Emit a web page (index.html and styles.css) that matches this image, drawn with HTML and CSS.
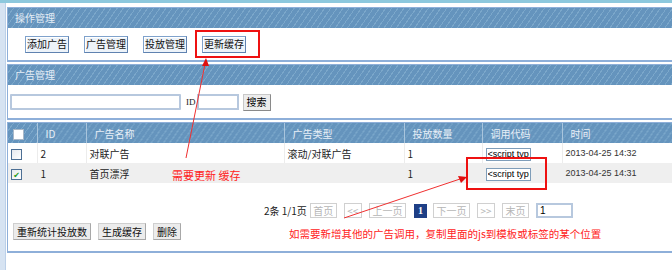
FILE: index.html
```html
<!DOCTYPE html>
<html lang="zh-CN">
<head>
    <meta charset="UTF-8">
    <title>广告管理</title>
    <link rel="stylesheet" href="styles.css">
</head>
<body>
    <div class="top-bar"></div>
    <div class="page">
        <div class="side-strip"></div>
        <div class="main">
            <!-- 操作管理 -->
            <div class="panel">
                <div class="panel-title">操作管理</div>
                <div class="panel-body ops">
                    <button class="op-button">添加广告</button>
                    <button class="op-button">广告管理</button>
                    <button class="op-button">投放管理</button>
                    <button class="op-button">更新缓存</button>
                </div>
            </div>

            <!-- 广告管理 搜索 -->
            <div class="panel">
                <div class="panel-title">广告管理</div>
                <div class="panel-body search">
                    <input type="text" class="search-input">
                    <label class="id-label">ID</label>
                    <input type="text" class="id-input">
                    <button class="search-button">搜索</button>
                </div>
            </div>

            <!-- 广告列表 -->
            <div class="panel list-panel">
                <table class="ad-table">
                    <thead>
                        <tr>
                            <th class="col-check"><span class="checkbox head-check"></span></th>
                            <th class="col-id">ID</th>
                            <th class="col-name">广告名称</th>
                            <th class="col-type">广告类型</th>
                            <th class="col-count">投放数量</th>
                            <th class="col-code">调用代码</th>
                            <th class="col-time">时间</th>
                        </tr>
                    </thead>
                    <tbody>
                        <tr>
                            <td><span class="checkbox"></span></td>
                            <td>2</td>
                            <td>对联广告</td>
                            <td>滚动/对联广告</td>
                            <td>1</td>
                            <td><input type="text" class="code-input" value="<script type=&quot;text/javascript&quot;>"></td>
                            <td class="time">2013-04-25 14:32</td>
                        </tr>
                        <tr class="alt">
                            <td><span class="checkbox checked">&#10004;</span></td>
                            <td>1</td>
                            <td>首页漂浮</td>
                            <td></td>
                            <td>1</td>
                            <td><input type="text" class="code-input" value="<script type=&quot;text/javascript&quot;>"></td>
                            <td class="time">2013-04-25 14:31</td>
                        </tr>
                    </tbody>
                </table>

                <div class="pager">
                    <span class="pager-info">2条 1/1页</span>
                    <span class="pager-btn">首页</span>
                    <span class="pager-btn">&lt;&lt;</span>
                    <span class="pager-btn">上一页</span>
                    <span class="pager-current">1</span>
                    <span class="pager-btn">下一页</span>
                    <span class="pager-btn">&gt;&gt;</span>
                    <span class="pager-btn">末页</span>
                    <input type="text" class="pager-input" value="1">
                </div>

                <div class="bottom-actions">
                    <button class="gray-button wide">重新统计投放数</button>
                    <button class="gray-button">生成缓存</button>
                    <button class="gray-button">删除</button>
                </div>
            </div>
        </div>
    </div>

    <!-- 标注 -->
    <div class="mark-box mark-cache"></div>
    <div class="mark-box mark-code"></div>
    <div class="note note-cache">需要更新&nbsp;缓存</div>
    <div class="note note-code">如需要新增其他的广告调用，复制里面的js到模板或标签的某个位置</div>
    <svg class="arrows" width="672" height="270" viewBox="0 0 672 270">
        <line x1="186" y1="158" x2="205" y2="64" stroke="#f03030" stroke-width="1"/>
        <polygon points="206,58 202,66 209,66" fill="#e01010"/>
        <line x1="344" y1="218" x2="460" y2="179" stroke="#f03030" stroke-width="1"/>
        <polygon points="467,177 458,176 461,183" fill="#e01010"/>
    </svg>
</body>
</html>
```

FILE: styles.css
```css
body {
    margin: 0;
    font-family: "Noto Sans CJK SC", "DejaVu Sans", sans-serif;
    font-size: 10px;
    color: #222;
    background-color: #fff;
    overflow: hidden;
    width: 672px;
    height: 270px;
    position: relative;
}

.top-bar {
    height: 3px;
    background-color: #8dc8dd;
    margin-bottom: 4px;
}

.page {
    display: flex;
    align-items: stretch;
}

.side-strip {
    flex-shrink: 0;
    width: 5px;
    margin-top: -4px;
    height: 270px;
    background-color: #d6e3f2;
    border-right: 1px solid #bcd0e8;
    margin-right: 1px;
}

.main {
    width: 720px;
    flex-shrink: 0;
}

.panel {
    border: 1px solid #8eafd9;
    border-bottom-width: 2px;
    margin-bottom: 2px;
    background-color: #fff;
}

.panel-title {
    height: 20px;
    line-height: 19px;
    padding-left: 7px;
    color: #e6eef6;
    background-color: #6797c0;
    background-image: repeating-linear-gradient(125deg, #6594bd 0 4px, #7ba7ca 4px 5px);
}

.panel-body {
    height: 32px;
    display: flex;
    align-items: center;
}

/* 操作按钮 */
.ops {
    padding-left: 17px;
    gap: 15px;
}

.op-button {
    font-family: inherit;
    font-size: 10px;
    height: 17px;
    padding: 0 1px;
    line-height: 14px;
    color: #111;
    background-color: #edf3f9;
    border: 1px solid #7fa2cc;
    border-right-color: #5f82b0;
    border-bottom-color: #5f82b0;
    box-shadow: inset 1px 1px 0 #fff;
    cursor: pointer;
}

/* 搜索 */
.search {
    height: 33px;
    padding-left: 2px;
}

.search-input {
    width: 167px;
    height: 12px;
    border: 2px solid #b7c8de;
    border-radius: 1px;
    padding: 0;
    margin-top: 1px;
}

.id-label {
    margin: 1px 1px 0 5px;
    font-family: "Liberation Serif", serif;
    font-size: 9px;
}

.id-input {
    width: 38px;
    height: 12px;
    border: 2px solid #b7c8de;
    padding: 0;
    margin-top: 1px;
}

.search-button {
    font-family: inherit;
    font-size: 10px;
    height: 17px;
    padding: 0 3px;
    line-height: 14px;
    margin-left: 4px;
    margin-top: 1px;
    background-color: #ececec;
    border: 1px solid #8a8a8a;
    border-top-color: #c8c8c8;
    border-left-color: #c8c8c8;
    cursor: pointer;
}

/* 列表 */
.list-panel {
    padding-bottom: 11px;
}

.ad-table {
    border-collapse: collapse;
    width: 100%;
    table-layout: fixed;
}

.ad-table th,
.ad-table td {
    box-sizing: border-box;
}

.ad-table th {
    height: 20px;
    padding: 0 0 0 8px;
    text-align: left;
    font-weight: normal;
    color: #e8eff7;
    background-color: #6797c0;
    background-image: repeating-linear-gradient(125deg, #6594bd 0 4px, #7ba7ca 4px 5px);
    border-right: 1px solid #a9c5dd;
}

.ad-table td {
    height: 20px;
    padding: 0 0 0 3px;
    border-right: 1px solid #ececec;
    white-space: nowrap;
    overflow: hidden;
}

.ad-table tr.alt td {
    background-color: #efefef;
    border-right-color: #efefef;
}

.col-check { width: 29px; }
.col-id { width: 49px; }
.col-name { width: 198px; }
.col-type { width: 120px; }
.col-count { width: 78px; }
.col-code { width: 80px; }

.ad-table th.col-check {
    padding-left: 5px;
}

.checkbox {
    display: inline-block;
    width: 9px;
    height: 9px;
    border: 1px solid #4d6f94;
    background: linear-gradient(135deg, #e6e9ee, #fff);
    vertical-align: middle;
    font-size: 8px;
    line-height: 9px;
    text-align: center;
    color: #1a9a1a;
}

.head-check {
    background: #fff;
    border-color: #a9b8c8;
}

.code-input {
    width: 41px;
    height: 11px;
    padding: 0 1px;
    border: 1px solid #7f9db9;
    font-family: "Liberation Sans", sans-serif;
    font-size: 9px;
    color: #000;
    vertical-align: middle;
}

.time {
    font-family: "Liberation Sans", sans-serif;
    font-size: 9px;
    color: #333;
}

/* 分页 */
.pager {
    display: flex;
    align-items: center;
    gap: 7px;
    margin-top: 20px;
    padding-left: 256px;
    height: 15px;
}

.pager-info {
    margin-right: -4px;
    font-size: 10px;
}

.pager-btn {
    height: 13px;
    padding: 0 2.5px;
    line-height: 13px;
    border: 1px solid #d0d0d0;
    color: #b5b5b5;
    background-color: #fff;
}

.pager-current {
    width: 13px;
    height: 14px;
    line-height: 14px;
    text-align: center;
    color: #fff;
    font-weight: bold;
    font-family: "Liberation Serif", serif;
    background-color: #1e3f86;
    margin: 0 -1px 0 1px;
}

.pager-input {
    width: 29px;
    height: 11px;
    padding: 0 2px;
    border: 2px solid #b7c8de;
    font-family: "Liberation Sans", sans-serif;
    font-size: 10px;
}

/* 底部按钮 */
.bottom-actions {
    display: flex;
    gap: 7px;
    margin-top: 5px;
    padding-left: 5px;
}

.gray-button {
    font-family: inherit;
    font-size: 10px;
    height: 17px;
    padding: 0 3px;
    line-height: 14px;
    color: #111;
    background-color: #ececec;
    border: 1px solid #cfcfcf;
    border-right-color: #a8a8a8;
    border-bottom-color: #a8a8a8;
    cursor: pointer;
}

/* 标注 */
.mark-box {
    position: absolute;
    border: 2px solid #ee1111;
}

.mark-cache {
    left: 195px;
    top: 30px;
    width: 61px;
    height: 24px;
}

.mark-code {
    left: 466px;
    top: 157px;
    width: 77px;
    height: 29px;
}

.note {
    position: absolute;
    color: #ff2222;
    font-size: 11px;
    white-space: nowrap;
}

.note-cache {
    left: 172px;
    top: 167px;
}

.note-code {
    left: 289px;
    top: 226px;
    font-size: 10.5px;
}

.arrows {
    position: absolute;
    left: 0;
    top: 0;
    pointer-events: none;
}
```
